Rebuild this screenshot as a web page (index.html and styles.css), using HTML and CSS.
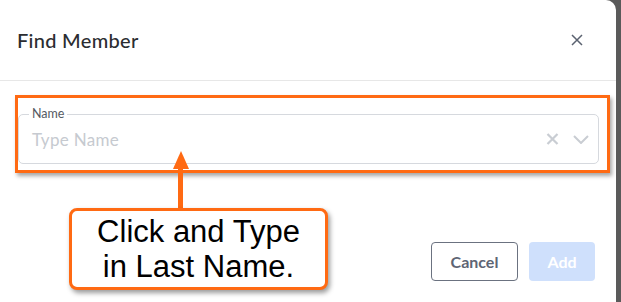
FILE: index.html
```html
<!DOCTYPE html>
<html lang="en">

<head>
    <meta charset="utf-8">
    <meta name="viewport" content="width=device-width, initial-scale=1.0">
    <title>Find Member</title>
    <link rel="stylesheet" href="styles.css">
</head>

<body>
    <div class="modal">
        <div class="modal-head">
            <h2>Find Member</h2>
            <button class="luk" aria-label="Close">
                <svg width="12" height="12" viewBox="0 0 12 12">
                    <path d="M1 1 L11 11 M11 1 L1 11" stroke="#5b6270" stroke-width="1.5" fill="none" />
                </svg>
            </button>
        </div>
        <div class="modal-body">
            <div class="felt">
                <span class="label">Name</span>
                <span class="placeholder">Type Name</span>
                <span class="ikoner">
                    <svg width="13" height="12" viewBox="0 0 13 12">
                        <path d="M1.5 1 L11.5 11 M11.5 1 L1.5 11" stroke="#c9cdd3" stroke-width="2.2" fill="none" />
                    </svg>
                    <svg width="16" height="9" viewBox="0 0 16 9">
                        <path d="M1 1 L8 8 L15 1" stroke="#c9cdd3" stroke-width="2" fill="none" />
                    </svg>
                </span>
            </div>
        </div>
        <div class="modal-foot">
            <button class="knap cancel">Cancel</button>
            <button class="knap add">Add</button>
        </div>

        <!-- annotation overlay -->
        <div class="marker"></div>
        <div class="pil">
            <div class="spids"></div>
            <div class="skaft"></div>
        </div>
        <div class="callout">Click and Type<br>in Last Name.</div>
    </div>
</body>

</html>
```

FILE: styles.css
```css
body {
    margin: 0;
    background-color: #5a5a5a;
    font-family: Lato, "Open Sans", sans-serif;
}

.modal {
    position: relative;
    width: 616px;
    height: 302px;
    background-color: white;
    border-top-right-radius: 10px;
    display: flex;
    flex-direction: column;
}

.modal-head {
    height: 80px;
    border-bottom: 1px solid #e7e7e7;
    display: flex;
    align-items: center;
    justify-content: space-between;
    padding: 0 33px 0 17px;
}

.modal-head h2 {
    margin: 0;
    font-size: 20px;
    font-weight: 500;
    letter-spacing: 0.3px;
    color: #2b2d31;
}

.luk {
    border: none;
    background: none;
    padding: 0;
    display: flex;
}

.modal-body {
    padding: 33px 17px 0 18px;
}

.felt {
    position: relative;
    height: 50px;
    box-sizing: border-box;
    border: 1px solid #d6d9de;
    border-radius: 5px;
    padding: 0 9px 0 13px;
    display: flex;
    align-items: center;
    justify-content: space-between;
}

.felt .label {
    position: absolute;
    left: 10px;
    top: -8px;
    font-size: 12.5px;
    line-height: 14px;
    color: #555a62;
    padding: 0 3px;
    background: white;
}

.placeholder {
    font-size: 17px;
    letter-spacing: 0.3px;
    color: #c6cad0;
}

.ikoner {
    display: flex;
    align-items: center;
    gap: 14px;
}

.modal-foot {
    display: flex;
    justify-content: flex-end;
    gap: 11px;
    padding: 78px 21px 0 0;
}

.knap {
    height: 39px;
    border-radius: 4px;
    font-family: Lato, sans-serif;
    font-size: 16px;
    font-weight: 700;
}

.cancel {
    width: 87px;
    background: white;
    border: 1px solid #6b7280;
    color: #5e6574;
}

.add {
    width: 66px;
    background: #cfe0fc;
    border: none;
    color: white;
}

/* ANNOTATION */

.marker {
    position: absolute;
    left: 15px;
    top: 95px;
    width: 589px;
    height: 72px;
    border: 3px solid #ff6a13;
    box-shadow: 2px 3px 4px rgba(0, 0, 0, 0.35);
}

.pil {
    position: absolute;
    left: 172px;
    top: 151px;
    width: 17px;
    display: flex;
    flex-direction: column;
    align-items: center;
}

.spids {
    width: 0;
    height: 0;
    border-left: 8.5px solid transparent;
    border-right: 8.5px solid transparent;
    border-bottom: 18px solid #ff6a13;
}

.skaft {
    width: 5px;
    height: 40px;
    background-color: #ff6a13;
}

.callout {
    position: absolute;
    left: 69px;
    top: 208px;
    width: 253px;
    height: 76px;
    border: 3px solid #ff6a13;
    border-radius: 8px;
    background: white;
    box-shadow: 2px 3px 5px rgba(0, 0, 0, 0.4);
    font-family: "Liberation Sans", Arial, sans-serif;
    font-size: 31px;
    line-height: 35px;
    text-align: center;
    color: black;
    display: flex;
    align-items: center;
    justify-content: center;
}
```
